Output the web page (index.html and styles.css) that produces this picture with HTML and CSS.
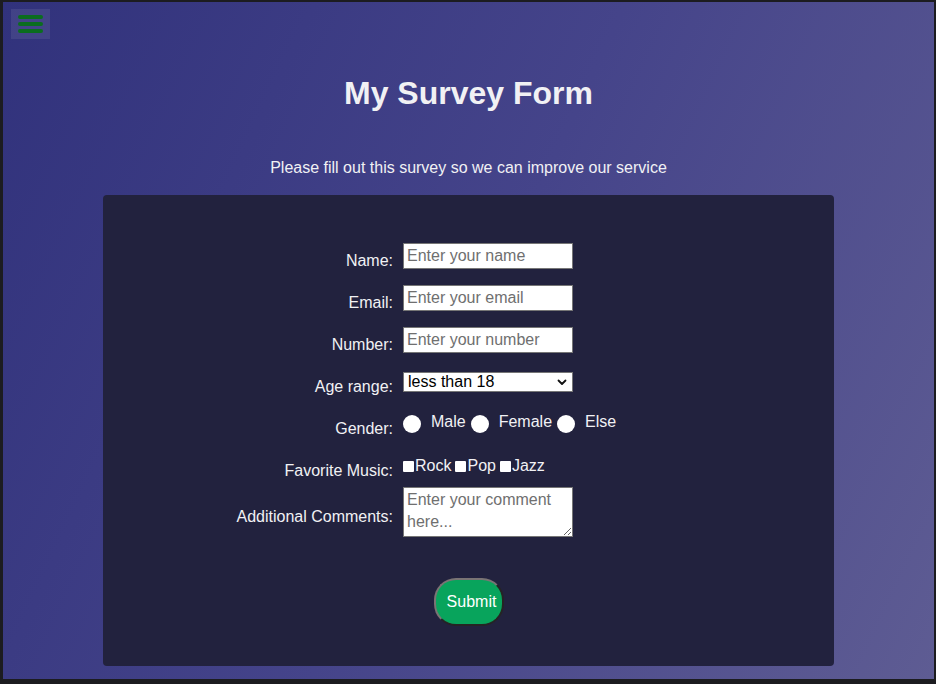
FILE: index.html
```html
<!DOCTYPE html>
<html lang="en">
<head>
<meta charset="utf-8">
<title>My Survey Form</title>
<link rel="stylesheet" href="styles.css">
</head>
<body>
<div class="page">
  <button class="menu" type="button" aria-label="Menu">
    <span class="bar"></span><span class="bar"></span><span class="bar"></span>
  </button>
  <h1 class="title">My Survey Form</h1>
  <p class="subtitle">Please fill out this survey so we can improve our service</p>
  <form class="card">
    <div class="row">
      <label class="lbl" for="name">Name:</label>
      <input class="field" id="name" type="text" placeholder="Enter your name">
    </div>
    <div class="row">
      <label class="lbl" for="email">Email:</label>
      <input class="field" id="email" type="email" placeholder="Enter your email">
    </div>
    <div class="row">
      <label class="lbl" for="number">Number:</label>
      <input class="field" id="number" type="number" placeholder="Enter your number">
    </div>
    <div class="row">
      <label class="lbl" for="age">Age range:</label>
      <span class="select-wrap">
        <select class="select" id="age">
          <option>less than 18</option>
          <option>18 - 30</option>
          <option>31 - 50</option>
          <option>more than 50</option>
        </select>
        <svg class="chev" width="10" height="7" viewBox="0 0 10 7"><path d="M1.5 1.5 L5 5 L8.5 1.5" fill="none" stroke="#111" stroke-width="1.8" stroke-linecap="round" stroke-linejoin="round"/></svg>
      </span>
    </div>
    <div class="row">
      <span class="lbl">Gender:</span>
      <span class="choices">
        <input class="radio" type="radio" name="gender" id="male"><label class="opt-r" for="male">Male</label>
        <input class="radio" type="radio" name="gender" id="female"><label class="opt-r" for="female">Female</label>
        <input class="radio" type="radio" name="gender" id="else"><label class="opt-r" for="else">Else</label>
      </span>
    </div>
    <div class="row row-music">
      <span class="lbl">Favorite Music:</span>
      <span class="choices">
        <input class="check" type="checkbox" id="rock"><label class="opt-c" for="rock">Rock</label>
        <input class="check" type="checkbox" id="pop"><label class="opt-c" for="pop">Pop</label>
        <input class="check" type="checkbox" id="jazz"><label class="opt-c" for="jazz">Jazz</label>
      </span>
    </div>
    <div class="row">
      <label class="lbl" for="comments">Additional Comments:</label>
      <textarea class="area" id="comments" placeholder="Enter your comment here..."></textarea>
    </div>
    <div class="actions">
      <button class="submit" type="submit">Submit</button>
    </div>
  </form>
</div>
</body>
</html>
```
FILE: styles.css
```css
* { box-sizing: border-box; }

html, body {
  margin: 0;
  padding: 0;
  background: #1c1c20;
  font-family: "Liberation Sans", Arial, sans-serif;
}

.page {
  position: relative;
  margin: 2px 2px 5px 3px;
  height: 677px;
  background: linear-gradient(115deg, #31327c 0%, #45448a 50%, #5e5c93 100%);
  color: #f1f1f4;
  padding-top: 1px;
  overflow: hidden;
}

.menu {
  position: absolute;
  left: 8px;
  top: 7px;
  width: 39px;
  height: 30px;
  padding: 6px 7px;
  border: none;
  background: rgba(255, 255, 255, 0.08);
  display: flex;
  flex-direction: column;
  justify-content: space-between;
}

.bar {
  display: block;
  width: 25px;
  height: 4px;
  border-radius: 2px;
  background: #0b6d1f;
}

.title {
  margin: 72px 0 0;
  font-size: 32px;
  line-height: 37px;
  font-weight: bold;
  text-align: center;
}

.subtitle {
  margin: 47px 0 0;
  font-size: 16px;
  line-height: 18px;
  text-align: center;
}

.card {
  margin: 18px 0 0 100px;
  width: 731px;
  height: 471px;
  background: #22223e;
  border-radius: 4px;
  padding-top: 48px;
}

.row {
  display: grid;
  grid-template-columns: 290px auto;
  column-gap: 10px;
  align-items: center;
  justify-content: start;
  margin-bottom: 16px;
}

.row-music { margin-bottom: 8px; }

.lbl {
  text-align: right;
  font-size: 16px;
  line-height: 18px;
  padding-top: 9px;
  margin-bottom: -1px;
}

.field {
  width: 170px;
  height: 26px;
  margin: 0;
  padding: 1px 3px;
  border: 1px solid #767676;
  border-radius: 0;
  background: #fff;
  font-family: "Liberation Sans", Arial, sans-serif;
  font-size: 16px;
  color: #000;
  -moz-appearance: textfield;
}

.field::placeholder, .area::placeholder { color: #6f6f6f; }

.field::-webkit-outer-spin-button,
.field::-webkit-inner-spin-button { -webkit-appearance: none; margin: 0; }

.select-wrap {
  position: relative;
  display: block;
  width: 170px;
  height: 20px;
}

.select {
  appearance: none;
  -webkit-appearance: none;
  display: block;
  width: 170px;
  height: 20px;
  margin: 0;
  padding: 0 4px;
  border: 1px solid #767676;
  border-radius: 0;
  background: #fff;
  font-family: "Liberation Sans", Arial, sans-serif;
  font-size: 16px;
  line-height: 18px;
  color: #000;
}

.chev {
  position: absolute;
  right: 6px;
  top: 7px;
  pointer-events: none;
}

.choices {
  display: flex;
  align-items: center;
  font-size: 16px;
  line-height: 18px;
}

.radio {
  appearance: none;
  -webkit-appearance: none;
  width: 18px;
  height: 18px;
  margin: 0 10px 0 0;
  border-radius: 50%;
  background: #fff;
  border: none;
}

.opt-r {
  margin-right: 5px;
  padding-bottom: 4px;
}

.check {
  appearance: none;
  -webkit-appearance: none;
  width: 11px;
  height: 11px;
  margin: 0 1px 0 0;
  border-radius: 1px;
  background: #fff;
  border: none;
}

.opt-c {
  margin-right: 4px;
}

.area {
  width: 170px;
  height: 50px;
  margin: 0;
  padding: 1px 3px;
  border: 1px solid #767676;
  border-radius: 0;
  background: #fff;
  font-family: "Liberation Sans", Arial, sans-serif;
  font-size: 16px;
  line-height: 22px;
  resize: both;
}

.actions {
  display: flex;
  justify-content: center;
  margin-top: 41px;
}

.submit {
  width: 70px;
  height: 48px;
  padding: 0 0 0 6px;
  border: 2px outset #7a7474;
  border-radius: 22px;
  background: #08a45c;
  color: #fff;
  font-family: "Liberation Sans", Arial, sans-serif;
  font-size: 16px;
}
```
